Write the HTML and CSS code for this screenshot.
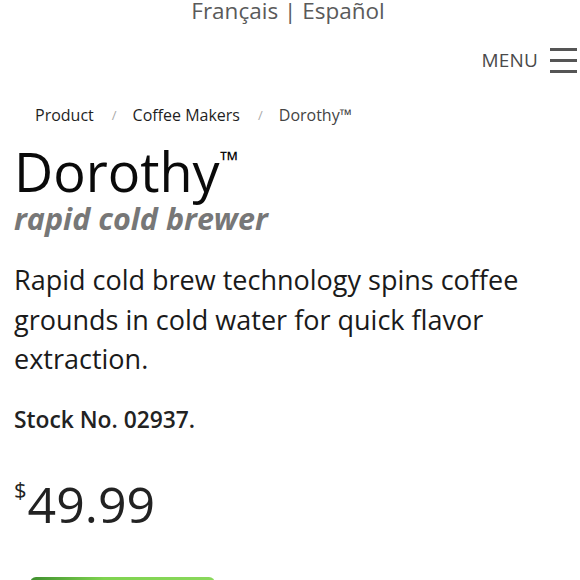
FILE: index.html
```html
<!DOCTYPE html>
<html lang="en">
<head>
  <meta charset="UTF-8">
  <meta name="viewport" content="width=device-width, initial-scale=1.0">
  <title>Dorothy rapid cold brewer</title>
  <link rel="stylesheet" href="styles.css">
</head>

<body>
  <!-- Language links -->
  <div class="lang-bar">
    <a href="#">Français</a> | <a href="#">Español</a>
  </div>

  <!-- Header -->
  <div class="header">
    <span class="menu-label">MENU</span>
    <span class="menu-icon">
      <span></span><span></span><span></span>
    </span>
  </div>

  <div class="product">
    <ul class="breadcrumb">
      <li><a href="#">Product</a></li>
      <li class="sep">/</li>
      <li><a href="#">Coffee Makers</a></li>
      <li class="sep">/</li>
      <li class="current">Dorothy™</li>
    </ul>

    <h1 class="title">Dorothy<sup>™</sup></h1>
    <h2 class="subtitle">rapid cold brewer</h2>

    <p class="description">Rapid cold brew technology spins coffee grounds in cold water for quick flavor extraction.</p>

    <p class="stock">Stock No. 02937.</p>

    <div class="price"><sup>$</sup>49.99</div>

    <button class="buy-button">Add to Cart</button>
  </div>
</body>
</html>
```

FILE: styles.css
```css
body {
  font-family: "Open Sans", sans-serif;
  background-color: #fff;
  color: #1d1d1d;
  margin: 0;
}

a {
  color: inherit;
  text-decoration: none;
}

.lang-bar {
  text-align: center;
  font-size: 22.5px;
  line-height: 22px;
  color: #5a5a5a;
  padding-right: 4px;
}

.header {
  display: flex;
  justify-content: flex-end;
  align-items: center;
  padding: 23px 3px 0 0;
  height: 30px;
}

.menu-label {
  font-size: 19px;
  color: #4a4a4a;
  margin-right: 12px;
  letter-spacing: 0.2px;
}

.menu-icon {
  display: flex;
  flex-direction: column;
  gap: 8px;
  width: 27px;
}

.menu-icon span {
  display: block;
  height: 3px;
  background: #555;
}

.product {
  padding: 0 14px;
}

.breadcrumb {
  list-style: none;
  display: flex;
  margin: 29px 0 0 21px;
  padding: 0;
  font-size: 16px;
  line-height: 22px;
  color: #1f1f1f;
}

.breadcrumb .sep {
  color: #aaa;
  font-size: 13px;
  margin: 0 16px 0 18px;
}

.breadcrumb .current {
  color: #444;
}

.title {
  font-size: 54px;
  font-weight: 400;
  line-height: 60px;
  margin: 15px 0 0 0;
  color: #0a0a0a;
}

.title sup {
  font-size: 24px;
  line-height: 0;
  vertical-align: baseline;
  position: relative;
  top: -23px;
}

.subtitle {
  font-size: 30.5px;
  font-style: italic;
  font-weight: 700;
  color: #777;
  line-height: 34px;
  margin: 0;
}

.description {
  font-size: 27px;
  line-height: 39.5px;
  margin: 25px 0 0 0;
  color: #1a1a1a;
}

.stock {
  font-size: 22.8px;
  font-weight: 600;
  margin: 25px 0 0 0;
  color: #222;
}

.price {
  font-size: 50px;
  line-height: 60px;
  margin-top: 39px;
  color: #222;
}

.price sup {
  font-size: 22px;
  vertical-align: top;
  line-height: 30px;
  margin-right: 1px;
}

.buy-button {
  display: block;
  margin: 43px 0 0 16px;
  width: 185px;
  height: 50px;
  border: none;
  border-radius: 6px;
  background: linear-gradient(90deg, #3f8f2e, #7fd34f 40%, #8ad85c);
  color: white;
  font-family: "Open Sans", sans-serif;
  font-size: 18px;
}
```
